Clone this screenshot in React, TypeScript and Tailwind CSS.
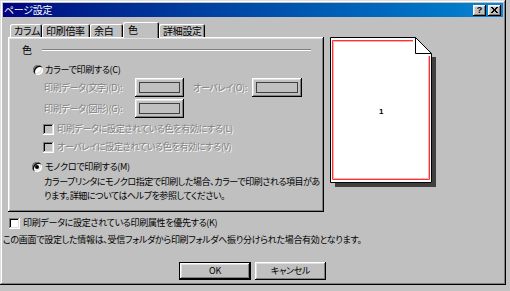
import React from "react";

const raised =
  "shadow-[inset_-1px_-1px_#000,inset_1px_1px_#fff,inset_-2px_-2px_#808080,inset_2px_2px_#dfdfdf]";
const sunken =
  "shadow-[inset_-1px_-1px_#fff,inset_1px_1px_#808080,inset_-2px_-2px_#dfdfdf,inset_2px_2px_#000]";
const dis = "text-[#808080] [text-shadow:1px_1px_0_#fff]";
const jp =
  "font-['Noto_Sans_CJK_JP','Noto_Sans_CJK_SC',sans-serif] [font-feature-settings:'palt'] text-[9px] leading-[12px] tracking-[-0.3px] whitespace-nowrap";

function Radio({ checked }: { checked?: boolean }) {
  return (
    <span className="w-[10px] h-[10px] rounded-full bg-white shadow-[inset_1px_1px_#808080,inset_2px_2px_#000,inset_-1px_-1px_#fff,inset_-2px_-2px_#dfdfdf] flex items-center justify-center shrink-0">
      {checked && <span className="w-[4px] h-[4px] rounded-full bg-black" />}
    </span>
  );
}

function Check({ disabled }: { disabled?: boolean }) {
  return (
    <span
      className={`w-[11px] h-[11px] shrink-0 ${sunken} ${
        disabled ? "bg-[#c0c0c0]" : "bg-white"
      }`}
    />
  );
}

function ColorBtn({ wide }: { wide?: boolean }) {
  return (
    <div
      className={`h-[19px] ${wide ? "w-[50px]" : "w-[49px]"} bg-[#c0c0c0] ${raised} flex items-center justify-center shrink-0`}
    >
      <div className={`${wide ? "w-[42px]" : "w-[41px]"} h-[11px] border border-[#404040]`} />
    </div>
  );
}

function Tab({
  label,
  w,
  selected,
}: {
  label: string;
  w: string;
  selected?: boolean;
}) {
  return (
    <div
      className={`${w} ${
        selected ? "h-[16px] -mb-[1px] z-10 pl-[5px] pb-[1px]" : "h-[13px] pl-[4px]"
      } bg-[#c0c0c0] rounded-t-[2px] shadow-[inset_1px_1px_#fff,inset_-1px_0_#000,inset_-2px_0_#808080] flex items-center shrink-0 text-black text-[10px]`}
    >
      {label}
    </div>
  );
}

export default function App() {
  return (
    <div className={`w-[510px] h-[291px] bg-[#c3c3c3] ${jp} text-black overflow-hidden`}>
      <div
        className={`w-[506px] h-[285px] bg-[#c0c0c0] p-[3px] flex flex-col shadow-[inset_-1px_-1px_#000,inset_1px_1px_#dfdfdf,inset_-2px_-2px_#808080,inset_2px_2px_#fff]`}
      >
        {/* title bar */}
        <div className="h-[14px] bg-gradient-to-r from-[#000080] to-[#1084d0] flex items-center justify-between pl-[1px] pr-[2px]">
          <span className="text-white text-[10px]">ページ設定</span>
          <div className="flex gap-[2px]">
            <div
              className={`w-[13px] h-[11px] bg-[#c0c0c0] ${raised} flex items-center justify-center font-['Liberation_Sans',sans-serif] font-bold text-[9px] leading-[9px] tracking-normal`}
            >
              ?
            </div>
            <div
              className={`w-[13px] h-[11px] bg-[#c0c0c0] ${raised} flex items-center justify-center`}
            >
              <svg width="7" height="6" viewBox="0 0 7 6">
                <path
                  d="M0 0h2v1h1v1h1V1h1V0h2v1H6v1H5v2h1v1h1v1H5V5H4V4H3v1H2v1H0V5h1V4h1V2H1V1H0z"
                  fill="#000"
                />
              </svg>
            </div>
          </div>
        </div>

        {/* body */}
        <div className="flex flex-col pl-[5px] mt-[5px]">
          <div className="flex items-start gap-[6px]">
            <div className="flex flex-col">
              {/* tabs */}
              <div className="flex items-end h-[15px] pl-[2px] relative z-10">
                <Tab label="カラム" w="w-[32px]" />
                <Tab label="印刷倍率" w="w-[48px]" />
                <Tab label="余白" w="w-[33px]" />
                <Tab label="色" w="w-[36px]" selected />
                <Tab label="詳細設定" w="w-[46px]" />
              </div>
              {/* panel */}
              <div
                className={`w-[316px] h-[175px] bg-[#c0c0c0] ${raised} p-[2px] flex flex-col`}
              >
                {/* group header */}
                <div className="flex items-center h-[12px] mt-[5px] pl-[12px]">
                  <span className="w-[20px] text-[10px]">色</span>
                  <div className="w-[269px] h-[2px] border-t border-[#808080] border-b border-b-white" />
                </div>
                {/* color radio */}
                <div className="flex items-center h-[12px] mt-[8px] pl-[23px] gap-[2px]">
                  <Radio />
                  <span>カラーで印刷する(C)</span>
                </div>
                {/* row 1 */}
                <div className="flex items-center h-[19px] mt-[2px] pl-[34px]">
                  <span className={`w-[91px] ${dis}`}>印刷データ(文字)(D):</span>
                  <ColorBtn />
                  <span className={`w-[59px] ml-[9px] ${dis}`}>オーバレイ(O):</span>
                  <ColorBtn wide />
                </div>
                {/* row 2 */}
                <div className="flex items-center h-[19px] mt-[2px] pl-[34px]">
                  <span className={`w-[91px] ${dis}`}>印刷データ(図形)(G):</span>
                  <ColorBtn />
                </div>
                {/* checkbox 1 */}
                <div className="flex items-center h-[12px] mt-[5px] pl-[33px] gap-[3px]">
                  <Check disabled />
                  <span className={dis}>印刷データに設定されている色を有効にする(L)</span>
                </div>
                {/* checkbox 2 */}
                <div className="flex items-center h-[12px] mt-[6px] pl-[33px] gap-[3px]">
                  <Check disabled />
                  <span className={dis}>オーバレイに設定されている色を有効にする(V)</span>
                </div>
                {/* mono radio */}
                <div className="flex items-center h-[12px] mt-[8px] pl-[22px] gap-[3px]">
                  <Radio checked />
                  <span>モノクロで印刷する(M)</span>
                </div>
                <div className="mt-[2px] pl-[34px] leading-[14px] tracking-[-0.45px]">
                  <div>カラープリンタにモノクロ指定で印刷した場合、カラーで印刷される項目があ</div>
                  <div>ります。詳細についてはヘルプを参照してください。</div>
                </div>
              </div>
            </div>

            {/* page preview */}
            <svg width="106" height="150" viewBox="0 0 106 150" className="mt-[15px] shrink-0">
              <rect x="102" y="20" width="4" height="130" fill="#404040" />
              <rect x="5" y="146" width="101" height="4" fill="#404040" />
              <path
                d="M0.5 0.5H85.5L101.5 16.5V145.5H0.5Z"
                fill="#fff"
                stroke="#000"
              />
              <path d="M85.5 0.5V16.5H101.5" fill="none" stroke="#000" />
              <path
                d="M83 3.5H2.5V142.5H99.5V19"
                fill="none"
                stroke="#ff3030"
              />
              <path
                d="M83 4.5H3.5V141.5H98.5V19"
                fill="none"
                stroke="#ffb0b0"
              />
              <text
                x="51"
                y="77"
                fontSize="8"
                fontWeight="bold"
                textAnchor="middle"
                fontFamily="Liberation Sans, sans-serif"
                fill="#000"
              >
                1
              </text>
            </svg>
          </div>

          {/* bottom checkbox */}
          <div className="flex items-center h-[12px] mt-[5px] pl-[6px] gap-[3px] -ml-[5px]">
            <Check />
            <span>印刷データに設定されている印刷属性を優先する(K)</span>
          </div>
          <div className="h-[14px] mt-[4px] -ml-[5px] flex items-center">
            この画面で設定した情報は、受信フォルダから印刷フォルダへ振り分けられた場合有効となります。
          </div>
          <div className="flex mt-[15px] pl-[171px] gap-[4px]">
            <div className="w-[72px] h-[18px] border border-black">
              <div className={`w-full h-full ${raised} flex items-center justify-center`}>OK</div>
            </div>
            <div className={`w-[71px] h-[18px] ${raised} flex items-center justify-center`}>
              キャンセル
            </div>
          </div>
        </div>
      </div>
    </div>
  );
}
